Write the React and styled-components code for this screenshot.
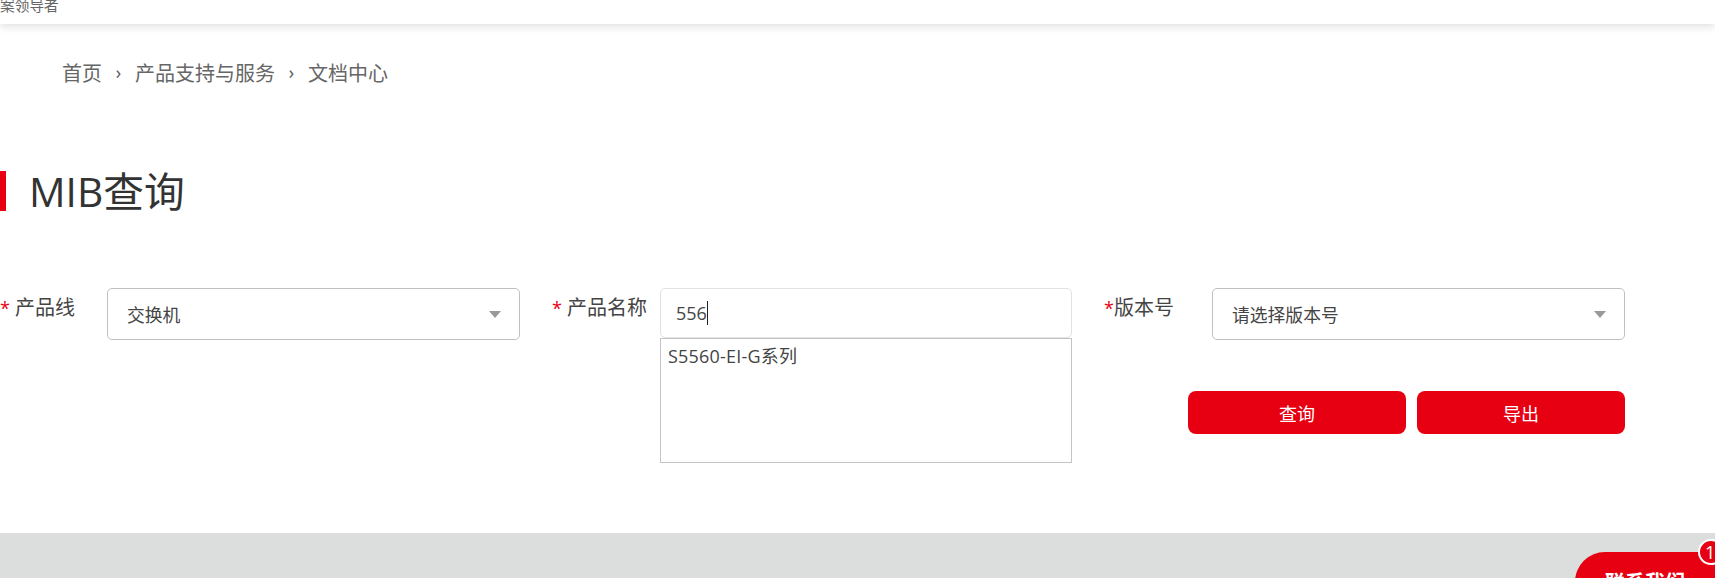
import React from "react";
import styled, { createGlobalStyle } from "styled-components";

const Global = createGlobalStyle`
  html, body { margin: 0; padding: 0; background: #fff; }
  body { font-family: "Open Sans", "Noto Sans CJK SC", sans-serif; }
  #root { height: 578px; overflow: hidden; }
`;

const Page = styled.div`
  position: relative;
  height: 578px;
  overflow: hidden;
  display: flex;
  flex-direction: column;
`;

const Header = styled.header`
  height: 24px;
  flex: none;
  overflow: hidden;
  background: #fff;
  box-shadow: 0 2px 10px rgba(0, 0, 0, 0.14);
  position: relative;
`;

const HeaderText = styled.div`
  margin-top: -5px;
  font-size: 14.7px;
  line-height: 20px;
  color: #666;
`;

const Breadcrumb = styled.nav`
  display: flex;
  align-items: center;
  height: 30px;
  margin-top: 33px;
  padding-left: 62px;
  font-size: 20px;
  color: #666;
`;

const Sep = styled.span`
  width: 33px;
  text-align: center;
  font-size: 18px;
  color: #555;
`;

const Title = styled.h1`
  margin: 84px 0 0;
  height: 40px;
  display: flex;
  align-items: center;
  border-left: 6px solid #e60012;
  padding-left: 23px;
  font-size: 40.7px;
  font-weight: 400;
  line-height: 38px;
  color: #333;
`;

const Form = styled.form`
  display: flex;
  gap: 32px;
  margin-top: 77px;
  align-items: flex-start;
`;

const Field = styled.div`
  width: ${(p) => p.$w || 520}px;
  flex: none;
  display: flex;
  flex-direction: column;
  align-items: flex-end;
`;

const Row = styled.div`
  width: 100%;
  display: flex;
  align-items: flex-start;
`;

const Label = styled.label`
  width: ${(p) => p.$w}px;
  flex: none;
  font-size: 20px;
  line-height: 26px;
  padding-top: 7px;
  color: #444;
  white-space: nowrap;
`;

const Star = styled.span`
  color: #e60012;
  font-size: 18px;
  margin-right: ${(p) => (p.$tight ? 0 : 5)}px;
`;

const Select = styled.div`
  flex: 1;
  height: 52px;
  box-sizing: border-box;
  border: 1px solid #c0c0c0;
  border-radius: 5px;
  padding: 0 18px 0 19px;
  display: flex;
  align-items: center;
  justify-content: space-between;
  font-size: 17.8px;
  color: #444;
  background: #fff;
`;

const Caret = styled.span`
  width: 0;
  height: 0;
  border-left: 6.5px solid transparent;
  border-right: 6.5px solid transparent;
  border-top: 7px solid #999;
`;

const Combo = styled.div`
  flex: 1;
  display: flex;
  flex-direction: column;
`;

const Input = styled.div`
  height: 50px;
  box-sizing: border-box;
  border: 1px solid #e2e2e2;
  border-radius: 5px;
  padding: 0 15px;
  display: flex;
  align-items: center;
  font-size: 18px;
  color: #444;
`;

const Cursor = styled.span`
  width: 1px;
  height: 24px;
  background: #222;
`;

const Options = styled.div`
  height: 125px;
  box-sizing: border-box;
  border: 1px solid #c4c4c4;
  padding: 4px 7px;
  font-size: 18px;
  letter-spacing: 0.2px;
  line-height: 26px;
  color: #444;
`;

const Actions = styled.div`
  display: flex;
  gap: 11px;
  margin-top: 51px;
`;

const Button = styled.button`
  width: ${(p) => p.$w}px;
  height: 43px;
  border: 0;
  border-radius: 8px;
  background: #e60012;
  color: #fff;
  font: inherit;
  font-size: 18px;
  padding: 0;
`;

const Footer = styled.footer`
  position: absolute;
  left: 0;
  right: 0;
  top: 533px;
  bottom: 0;
  background: #dcdddd;
`;

const Contact = styled.div`
  position: absolute;
  left: 1575px;
  right: 0;
  top: 552px;
  height: 60px;
  background: #e60012;
  border-radius: 30px 0 0 30px;
  color: #fff;
  font-size: 20px;
  font-weight: 600;
  line-height: 26px;
  padding: 18px 0 0 30px;
  box-sizing: border-box;
`;

const Badge = styled.span`
  position: absolute;
  left: 1698px;
  top: 539px;
  width: 26px;
  height: 26px;
  box-sizing: border-box;
  border: 2px solid #fff;
  border-radius: 50%;
  background: #e60012;
  color: #fff;
  font-size: 18px;
  line-height: 22px;
  padding-left: 5px;
`;

export default function App() {
  return (
    <Page>
      <Global />
      <Header>
        <HeaderText>案领导者</HeaderText>
      </Header>
      <Breadcrumb>
        <span>首页</span>
        <Sep>›</Sep>
        <span>产品支持与服务</span>
        <Sep>›</Sep>
        <span>文档中心</span>
      </Breadcrumb>
      <Title>MIB查询</Title>
      <Form>
        <Field>
          <Row>
            <Label $w={107}><Star>*</Star>产品线</Label>
            <Select>交换机<Caret /></Select>
          </Row>
        </Field>
        <Field>
          <Row>
            <Label $w={108}><Star>*</Star>产品名称</Label>
            <Combo>
              <Input>556<Cursor /></Input>
              <Options>S5560-EI-G系列</Options>
            </Combo>
          </Row>
        </Field>
        <Field $w={521}>
          <Row>
            <Label $w={108}><Star $tight>*</Star>版本号</Label>
            <Select>请选择版本号<Caret /></Select>
          </Row>
          <Actions>
            <Button type="button" $w={218}>查询</Button>
            <Button type="button" $w={208}>导出</Button>
          </Actions>
        </Field>
      </Form>
      <Footer />
      <Contact>联系我们</Contact>
      <Badge>1</Badge>
    </Page>
  );
}
